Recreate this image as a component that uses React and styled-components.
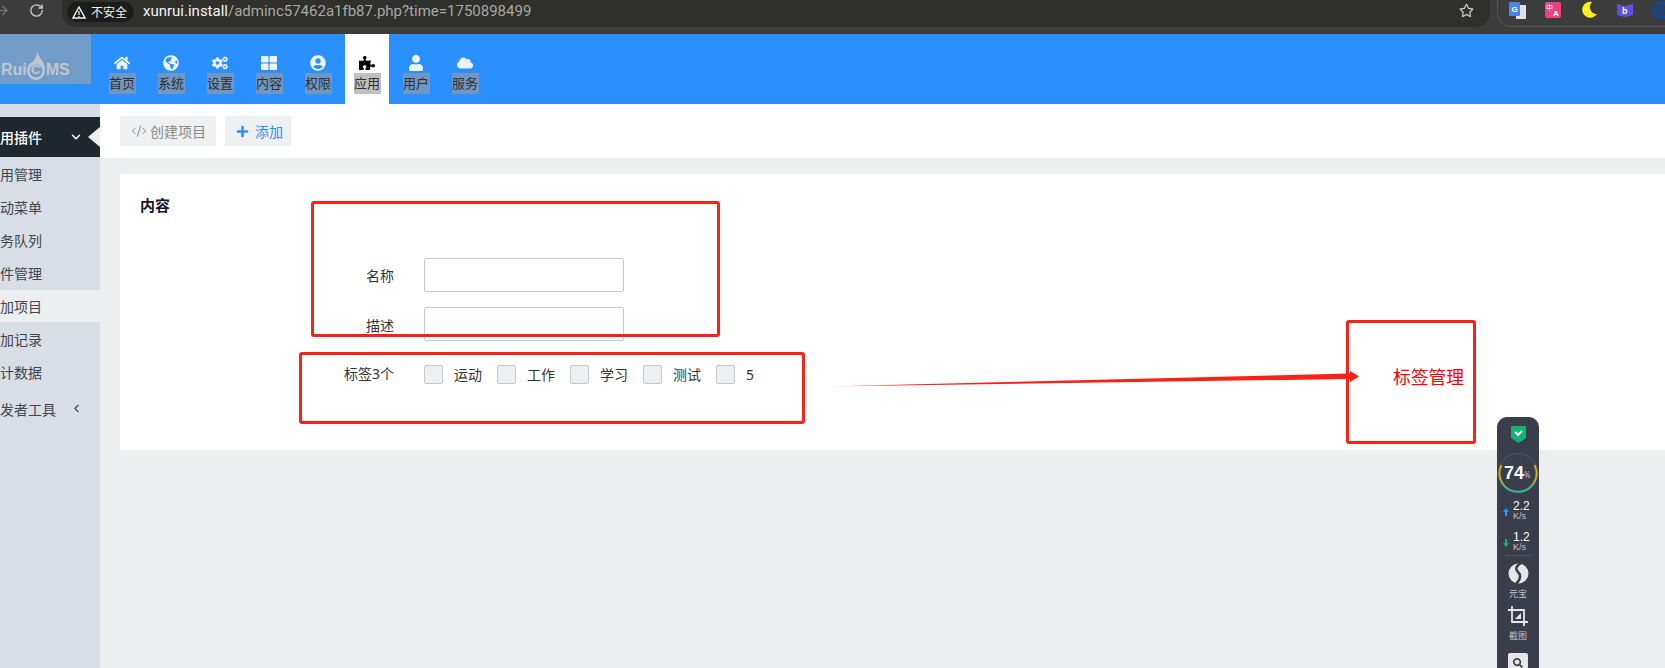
import React from 'react';
import styled, { createGlobalStyle } from 'styled-components';
import {
  FaHome, FaGlobeAmericas, FaCogs, FaThLarge, FaUserCircle, FaPuzzlePiece, FaUser, FaCloud,
  FaPlus, FaRegStar, FaSearch,
} from 'react-icons/fa';
import { ArrowRight, RotateCw, ChevronDown, ChevronLeft, CodeXml } from 'lucide-react';

const CJK = '"Noto Sans", "Noto Sans CJK SC", sans-serif';

const GlobalStyle = createGlobalStyle`
  html, body { margin: 0; padding: 0; background: #edeef0; }
  body { font-family: ${CJK}; overflow: hidden; }
  * { box-sizing: border-box; }
`;

const Page = styled.div`
  position: relative;
  width: 1665px;
  height: 668px;
  overflow: hidden;
  display: flex;
  flex-direction: column;
`;

/* browser bar */
const Chrome = styled.div`
  height: 34px;
  flex: none;
  background: #3c3c3c;
  display: flex;
  align-items: flex-start;
  overflow: hidden;
`;
const ChromeBtn = styled.div`
  width: 20px;
  height: 20px;
  display: flex;
  align-items: center;
  justify-content: center;
  color: ${(p) => p.$dim ? '#77777a' : '#c8c8c8'};
`;
const ChromeNav = styled.div`
  width: 70px;
  flex: none;
  display: flex;
  gap: 14px;
  margin-left: -8px;
`;
const AddressBar = styled.div`
  width: 1428px;
  flex: none;
  height: 27px;
  background: #2f2f2b;
  border-radius: 0 0 14px 14px;
  display: flex;
  align-items: center;
  padding: 0 16px 0 5px;
`;
const SafeChip = styled.div`
  height: 20px;
  width: 67px;
  flex: none;
  margin-top: -3px;
  border-radius: 10px;
  background: #1c1c1a;
  color: #f2f2f2;
  font-size: 12px;
  display: flex;
  align-items: center;
  gap: 5px;
  padding-left: 5px;
`;
const Url = styled.div`
  margin-left: 9px;
  margin-top: -6px;
  font-size: 15px;
  color: #a9a9a5;
  font-family: "Roboto", "Noto Sans", sans-serif;
  flex: 1;
  b { font-weight: 400; color: #f4f4f4; }
`;
const Star = styled.div`
  color: #c9c9c9;
  font-size: 15px;
  display: flex;
  margin-top: -6px;
`;
const Extensions = styled.div`
  flex: none;
  width: 190px;
  height: 27px;
  margin-left: 7px;
  border: 1px solid #525252;
  border-top: none;
  border-right: none;
  border-radius: 0 0 0 14px;
  display: flex;
  align-items: center;
  gap: 19px;
  padding: 0 0 6px 11px;
`;

/* top nav */
const Nav = styled.div`
  height: 70px;
  flex: none;
  background: #2a8fff;
  display: flex;
  align-items: flex-start;
`;
const Logo = styled.div`
  width: 91px;
  height: 50px;
  background: #729dc8;
  margin-right: 9px;
  display: flex;
  align-items: center;
  padding: 21px 0 0 1px;
  color: #c0c6cc;
  font-family: "Liberation Sans", sans-serif;
  font-weight: 700;
  font-size: 16px;
  line-height: 18px;
`;
const FlameMark = styled.span`
  position: relative;
  width: 18px;
  margin-right: 1px;
  text-align: center;
  font-size: 13px;
  svg { position: absolute; left: 0; top: -10px; }
  span { position: relative; }
`;
const Tabs = styled.div`
  display: flex;
  gap: 5px;
`;
const Tab = styled.div`
  width: 44px;
  height: 70px;
  display: flex;
  flex-direction: column;
  align-items: center;
  padding-top: 21px;
  background: ${(p) => p.$active ? '#fff' : 'transparent'};
  color: ${(p) => p.$active ? '#000' : '#eef4ff'};
  svg { font-size: 16px; height: 16px; display: block; flex: none; }
`;
const TabLabel = styled.div`
  width: 27px;
  height: 21px;
  margin-top: 2px;
  background: ${(p) => p.$active ? '#c0c0c0' : '#7097c4'};
  color: #2f2f2f;
  font-size: 13px;
  line-height: 21px;
  text-align: center;
  white-space: nowrap;
`;

/* page body */
const Body = styled.div`
  flex: 1;
  display: flex;
  min-height: 0;
`;
const Sidebar = styled.div`
  width: 100px;
  flex: none;
  background: #d9dee6;
  padding-top: 13px;
  overflow: hidden;
`;
const SideHead = styled.div`
  position: relative;
  height: 40px;
  background: #20282f;
  color: #fff;
  font-size: 14px;
  font-weight: 500;
  display: flex;
  align-items: center;
  span { margin-left: -14px; }
  svg { position: absolute; left: 69px; top: 13px; }
`;
const Notch = styled.i`
  position: absolute;
  right: 0;
  top: 10px;
  border: 10px solid transparent;
  border-left: none;
  border-right: 12px solid #edeef0;
`;
const SideItem = styled.div`
  height: ${(p) => p.$active ? 32 : 33}px;
  display: flex;
  align-items: center;
  position: relative;
  font-size: 14px;
  color: #3e4651;
  background: ${(p) => p.$active ? '#edeef0' : 'transparent'};
  margin-top: ${(p) => p.$gap || 0}px;
  span { margin-left: -14px; white-space: nowrap; }
  svg { position: absolute; left: 70px; top: 10px; }
`;
const Main = styled.div`
  flex: 1;
  min-width: 0;
  background: #edeef0;
`;
const Toolbar = styled.div`
  height: 54px;
  background: #fff;
  display: flex;
  align-items: center;
  gap: 9px;
  padding-left: 20px;
`;
const ToolBtn = styled.div`
  height: 30px;
  background: #eef0f2;
  color: ${(p) => p.$primary ? '#2a8fff' : '#8a8a8a'};
  display: flex;
  align-items: center;
  font-size: 14px;
  gap: ${(p) => p.$primary ? 6 : 3}px;
  padding: 0 ${(p) => p.$primary ? 8 : 10}px 0 11px;
  svg { font-size: 13px; flex: none; }
`;
const Card = styled.div`
  margin: 16px 0 0 20px;
  height: 276px;
  background: #fff;
  padding: 21px 0 0 20px;
  border-radius: 2px 0 0 0;
`;
const CardTitle = styled.div`
  font-size: 15px;
  font-weight: 700;
  line-height: 20px;
  color: #14142b;
`;
const Form = styled.div`
  margin-top: 43px;
  margin-left: -20px;
  display: flex;
  flex-direction: column;
`;
const Row = styled.div`
  display: flex;
  align-items: center;
  margin-bottom: ${(p) => p.$mb || 0}px;
`;
const Label = styled.div`
  width: 274px;
  text-align: right;
  margin-right: 30px;
  font-size: 14px;
  line-height: 18px;
  color: #333;
  padding-top: ${(p) => p.$top || 0}px;
`;
const Input = styled.input`
  width: 200px;
  height: 34px;
  background: #fff;
  border: 1px solid #c9c9c9;
  border-radius: 2px;
  outline: none;
`;
const CheckGroup = styled.div`
  display: flex;
`;
const CheckItem = styled.label`
  width: 73px;
  display: flex;
  align-items: center;
  font-size: 14px;
  color: #333;
`;
const Box = styled.span`
  width: 19px;
  height: 19px;
  margin-right: 11px;
  background: #edf0f3;
  border: 1px solid #c9c9c9;
  border-radius: 2px;
`;

/* annotations drawn on top of the screenshot */
const RedBox = styled.div`
  position: absolute;
  left: ${(p) => p.$x}px;
  top: ${(p) => p.$y}px;
  width: ${(p) => p.$w}px;
  height: ${(p) => p.$h}px;
  border: 3px solid #fb2117;
  border-radius: 3px;
`;
const Arrow = styled.svg`
  position: absolute;
  left: 820px;
  top: 360px;
`;
const RedText = styled.div`
  position: absolute;
  left: 1393px;
  top: 364px;
  font-size: 17.8px;
  line-height: 26px;
  color: #f00;
`;

/* floating network widget */
const Widget = styled.div`
  position: absolute;
  left: 1497px;
  top: 417px;
  width: 42px;
  height: 270px;
  background: #3a3d4a;
  border-radius: 10px 10px 0 0;
  display: flex;
  flex-direction: column;
  align-items: center;
  color: #fff;
`;
const Shield = styled.svg`
  margin-top: 8px;
  flex: none;
`;
const Gauge = styled.div`
  position: relative;
  width: 42px;
  height: 42px;
  margin-top: 9px;
  flex: none;
  svg { position: absolute; inset: 0; }
  b { position: absolute; left: 7px; top: 11px; font-size: 18px; line-height: 20px; font-family: "Liberation Sans", sans-serif; }
  i { position: absolute; left: 27px; top: 18px; font-size: 8px; line-height: 10px; font-style: normal; color: #b8bac2; }
`;
const Speed = styled.div`
  width: 100%;
  height: 29px;
  flex: none;
  margin-top: ${(p) => p.$mt}px;
  display: flex;
  padding-left: 6px;
  font-family: "Liberation Sans", sans-serif;
  svg { margin-top: 9px; flex: none; }
  div { margin-left: 4px; font-size: 12px; line-height: 10px; padding-top: 2px; }
  small { display: block; font-size: 9px; line-height: 10px; color: #c4c6cc; }
`;
const Divider = styled.div`
  width: 26px;
  height: 1px;
  background: #4b5560;
  margin-top: -4px;
  flex: none;
`;
const ToolIcon = styled.svg`
  margin-top: ${(p) => p.$mt}px;
  flex: none;
`;
const ToolLabel = styled.div`
  font-size: 9px;
  line-height: 12px;
  margin-top: 4px;
  color: #c4c6cc;
  flex: none;
`;
const SearchTile = styled.div`
  width: 20px;
  height: 20px;
  margin-top: 11px;
  background: #e6e6e8;
  border-radius: 2px;
  color: #33363f;
  display: flex;
  align-items: center;
  justify-content: center;
  font-size: 10px;
  flex: none;
`;

const tabs = [
  ['首页', FaHome], ['系统', FaGlobeAmericas], ['设置', FaCogs], ['内容', FaThLarge],
  ['权限', FaUserCircle], ['应用', FaPuzzlePiece], ['用户', FaUser], ['服务', FaCloud],
];
const menu = ['应用管理', '启动菜单', '任务队列', '插件管理', '添加项目', '添加记录', '统计数据'];
const tags = ['运动', '工作', '学习', '测试', '5'];

function ExtensionIcons() {
  return (
    <Extensions>
      <svg width="17" height="17" viewBox="0 0 17 17">
        <rect x="7" y="3" width="10" height="14" fill="#dfe1e5" />
        <rect x="0" y="0" width="11" height="14" rx="1" fill="#4a86e8" />
        <text x="2.5" y="10" fontSize="8" fontWeight="700" fill="#fff" fontFamily="Liberation Sans">G</text>
      </svg>
      <svg width="16" height="16" viewBox="0 0 16 16">
        <rect width="16" height="16" rx="2" fill="#e8437f" />
        <text x="1" y="8" fontSize="7" fill="#fff" fontFamily="Noto Sans CJK SC">中</text>
        <text x="8" y="14" fontSize="8" fontWeight="700" fill="#fff" fontFamily="Liberation Sans">A</text>
      </svg>
      <svg width="18" height="18" viewBox="0 0 18 18">
        <path d="M12 1a8 8 0 1 0 5 12A7 7 0 0 1 12 1z" fill="#f7f01a" />
      </svg>
      <svg width="16" height="14" viewBox="0 0 16 14">
        <path d="M0 1l8 2 8-2v11l-8 2-8-2z" fill="#5b52e0" />
        <text x="5" y="11" fontSize="9" fontWeight="700" fill="#fff" fontFamily="Liberation Sans">b</text>
      </svg>
      <svg width="18" height="18" viewBox="0 0 18 18">
        <circle cx="9" cy="9" r="7.5" fill="none" stroke="#0d47a1" strokeWidth="3" />
        <path d="M9 5l4 7H5z" fill="#0d47a1" />
      </svg>
    </Extensions>
  );
}

function NetWidget() {
  return (
    <Widget>
      <Shield width="15" height="18" viewBox="0 0 15 18">
        <path d="M0 1h15v12l-7.500 5L0 13z" fill="#11b573" />
        <path d="M4 7l3 3 4-4" fill="none" stroke="#fff" strokeWidth="2" />
      </Shield>
      <Gauge>
        <svg width="42" height="42" viewBox="0 0 42 42">
          <defs>
            <linearGradient id="ring" x1="0" x2="0" y1="0" y2="1">
              <stop offset="0" stopColor="#e09a1c" />
              <stop offset="0.45" stopColor="#b5b52a" />
              <stop offset="1" stopColor="#2bb5a0" />
            </linearGradient>
          </defs>
          <circle cx="21" cy="21" r="19.500" fill="#3a3d4a" stroke="#4a4d5a" strokeWidth="1.500" />
          <path d="M4.500 13A18.500 18.500 0 1 0 37.500 13" fill="none" stroke="url(#ring)" strokeWidth="2" />
        </svg>
        <b>74</b><i>%</i>
      </Gauge>
      <Speed $mt={5}>
        <svg width="6" height="8" viewBox="0 0 6 8"><path d="M3 0l3 4H4v4H2V4H0z" fill="#1e9fff" /></svg>
        <div>2.2<small>K/s</small></div>
      </Speed>
      <Speed $mt={2}>
        <svg width="6" height="8" viewBox="0 0 6 8"><path d="M3 8L0 4h2V0h2v4h2z" fill="#11b573" /></svg>
        <div>1.2<small>K/s</small></div>
      </Speed>
      <Divider />
      <ToolIcon $mt={7} width="21" height="21" viewBox="0 0 21 21">
        <circle cx="10.500" cy="10.500" r="10" fill="#e6e6e8" />
        <path d="M13 0c-5 3-6 6-3 9s3 7-2 12" fill="none" stroke="#3a3d4a" strokeWidth="2.500" />
      </ToolIcon>
      <ToolLabel>元宝</ToolLabel>
      <ToolIcon $mt={6} width="20" height="20" viewBox="0 0 20 20">
        <path d="M4 0v16h16M0 4h16v16" fill="none" stroke="#e6e6e8" strokeWidth="1.800" />
        <path d="M7 13l6-6v6z" fill="#e6e6e8" />
      </ToolIcon>
      <ToolLabel>截图</ToolLabel>
      <SearchTile><FaSearch /></SearchTile>
    </Widget>
  );
}

export default function App() {
  return (
    <Page>
      <GlobalStyle />
      <Chrome>
        <ChromeNav>
          <ChromeBtn $dim><ArrowRight size={15} /></ChromeBtn>
          <ChromeBtn><RotateCw size={15} strokeWidth={2.2} /></ChromeBtn>
        </ChromeNav>
        <AddressBar>
          <SafeChip>
            <svg width="14" height="13" viewBox="0 0 14 13">
              <path d="M7 1l6 11H1z" fill="none" stroke="#f2f2f2" strokeWidth="1.400" />
              <path d="M7 5v4M7 10v1" stroke="#f2f2f2" strokeWidth="1.200" />
            </svg>
            不安全
          </SafeChip>
          <Url><b>xunrui.install</b>/adminc57462a1fb87.php?time=1750898499</Url>
          <Star><FaRegStar /></Star>
        </AddressBar>
        <ExtensionIcons />
      </Chrome>

      <Nav>
        <Logo>
          <span>Rui</span>
          <FlameMark>
            <svg width="18" height="30" viewBox="0 0 18 30">
              <path d="M10 0c1 6 8 10 8 20a9 9 0 0 1-18 0c0-4 2-7 5-9 3-2 5-6 5-11z" fill="#c0c6cc" />
              <circle cx="9" cy="20" r="6.500" fill="#729dc8" />
            </svg>
            <span>C</span>
          </FlameMark>
          <span>MS</span>
        </Logo>
        <Tabs>
          {tabs.map(([name, Icon]) => (
            <Tab key={name} $active={name === '应用'}>
              <Icon />
              <TabLabel $active={name === '应用'}>{name}</TabLabel>
            </Tab>
          ))}
        </Tabs>
      </Nav>

      <Body>
        <Sidebar>
          <SideHead>
            <span>应用插件</span>
            <ChevronDown size={14} strokeWidth={2.500} />
            <Notch />
          </SideHead>
          {menu.map((m) => (
            <SideItem key={m} $active={m === '添加项目'} $gap={m === '添加项目' ? 1 : 0}><span>{m}</span></SideItem>
          ))}
          <SideItem $gap={4}><span>开发者工具</span><ChevronLeft size={13} strokeWidth={2} /></SideItem>
        </Sidebar>
        <Main>
          <Toolbar>
            <ToolBtn><CodeXml size={16} strokeWidth={1.500} />创建项目</ToolBtn>
            <ToolBtn $primary><FaPlus />添加</ToolBtn>
          </Toolbar>
          <Card>
            <CardTitle>内容</CardTitle>
            <Form>
              <Row $mb={15}>
                <Label $top={2}>名称</Label>
                <Input />
              </Row>
              <Row $mb={23}>
                <Label $top={4}>描述</Label>
                <Input />
              </Row>
              <Row>
                <Label>标签3个</Label>
                <CheckGroup>
                  {tags.map((t) => (
                    <CheckItem key={t}><Box />{t}</CheckItem>
                  ))}
                </CheckGroup>
              </Row>
            </Form>
          </Card>
        </Main>
      </Body>

      <RedBox $x={311} $y={201} $w={409} $h={136} />
      <RedBox $x={299} $y={352} $w={506} $h={72} />
      <RedBox $x={1346} $y={320} $w={130} $h={124} />
      <Arrow width="540" height="30" viewBox="0 0 540 30">
        <defs>
          <linearGradient id="fade" x1="0" x2="1" y1="0" y2="0">
            <stop offset="0" stopColor="#fb2117" stopOpacity="0.400" />
            <stop offset="0.120" stopColor="#fb2117" />
          </linearGradient>
        </defs>
        <path d="M7 26.500L530 13.500V19z" fill="url(#fade)" />
        <path d="M530 11l9 5.500-9 5.500z" fill="#fb2117" />
      </Arrow>
      <RedText>标签管理</RedText>
      <NetWidget />
    </Page>
  );
}
